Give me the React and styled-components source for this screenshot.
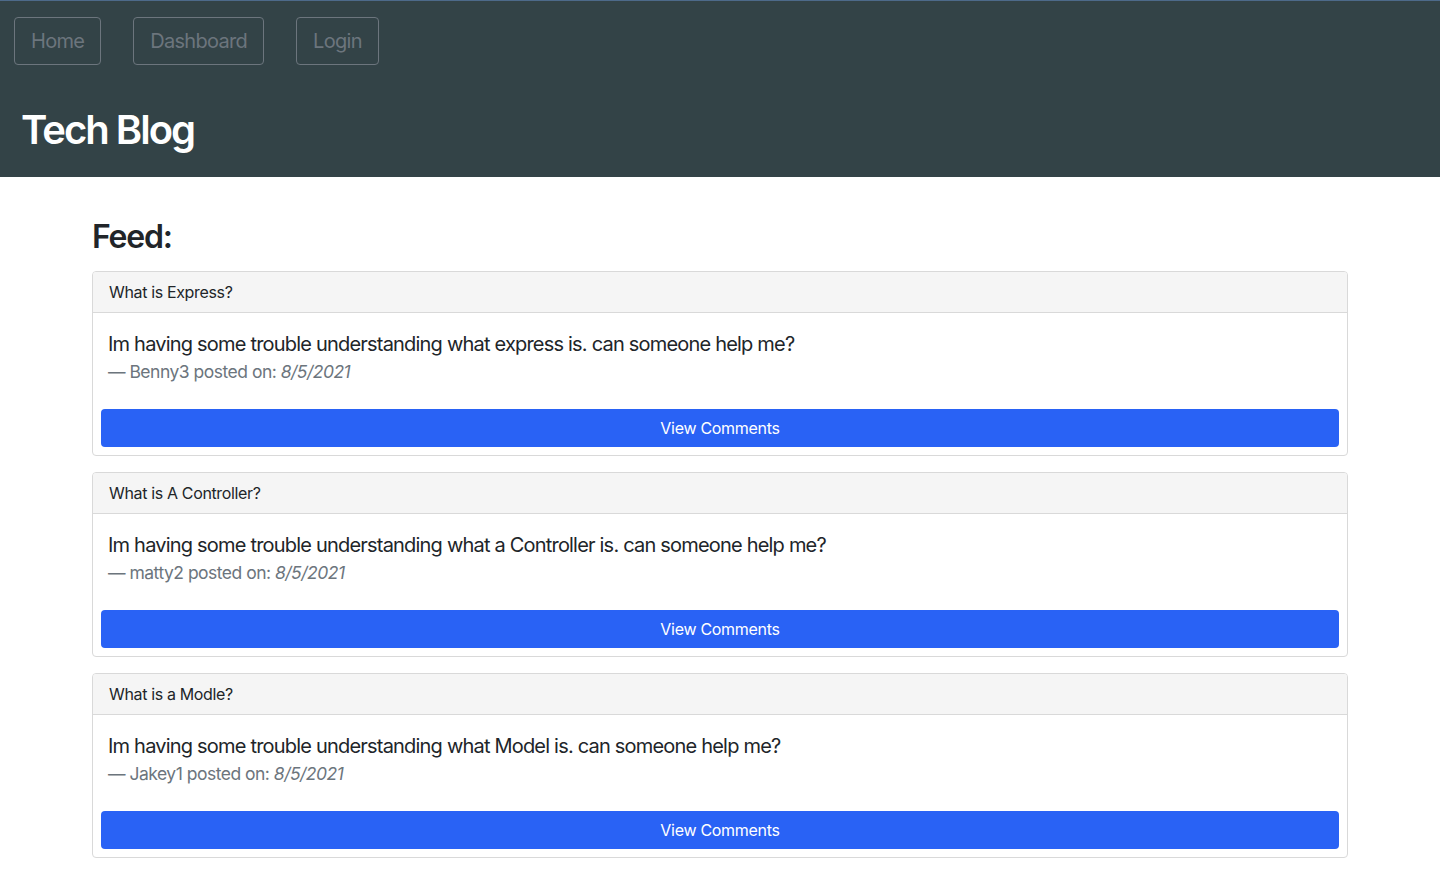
import styled, { createGlobalStyle } from "styled-components"

const Global = createGlobalStyle`
  * { box-sizing: border-box; }
  body {
    margin: 0;
    font-family: Inter, "Noto Sans", "Liberation Sans", sans-serif;
    color: #212529;
    background: #fff;
  }
`;

const Header = styled.header`
  background: #334347;
  border-top: 1px solid #4d6a8a;
  padding: 16px 0 0 14px;
  height: 177px;
`;

const Nav = styled.nav`
  display: flex;
  gap: 32px;
`;

const NavBtn = styled.button`
  font-family: inherit;
  font-size: 20px;
  line-height: 30px;
  letter-spacing: -0.7px;
  padding: 8px 16px;
  background: transparent;
  color: #6c757d;
  border: 1px solid #6c757d;
  border-radius: 4px;
  cursor: pointer;
`;

const Title = styled.h1`
  margin: 41px 0 0 7px;
  font-size: 40px;
  font-weight: 600;
  line-height: 48px;
  color: #fff;
  letter-spacing: -2px;
`;

const Main = styled.main`
  margin: 0 92px;
  padding-top: 41px;
`;

const FeedTitle = styled.h2`
  margin: 0 0 15px;
  font-size: 32px;
  font-weight: 600;
  line-height: 38px;
  letter-spacing: -1.2px;
`;

const Card = styled.section`
  border: 1px solid #d9d9d9;
  border-radius: 4px;
  margin-bottom: 16px;
  overflow: hidden;
`;

const CardHead = styled.div`
  background: #f5f5f5;
  border-bottom: 1px solid #d9d9d9;
  padding: 8px 16px;
  font-size: 16px;
  line-height: 24px;
  letter-spacing: -0.35px;
`;

const CardBody = styled.div`
  padding: 16px 15px 0;
`;

const Lead = styled.p`
  margin: 0;
  font-size: 20px;
  line-height: 30px;
  letter-spacing: -0.8px;
`;

const Byline = styled.p`
  margin: 0 0 24px;
  font-size: 17.5px;
  line-height: 26px;
  letter-spacing: -0.5px;
  color: #6c757d;
  em { font-style: italic; }
`;

const ViewBtn = styled.button`
  display: block;
  width: calc(100% - 16px);
  margin: 0 8px 8px;
  height: 38px;
  border: none;
  border-radius: 4px;
  background: #2962f5;
  color: #fff;
  font-family: inherit;
  font-size: 16px;
  letter-spacing: -0.3px;
  cursor: pointer;
`;

const posts = [
  { title: "What is Express?", body: "Im having some trouble understanding what express is. can someone help me?", user: "Benny3", date: "8/5/2021" },
  { title: "What is A Controller?", body: "Im having some trouble understanding what a Controller is. can someone help me?", user: "matty2", date: "8/5/2021" },
  { title: "What is a Modle?", body: "Im having some trouble understanding what Model is. can someone help me?", user: "Jakey1", date: "8/5/2021" },
];

export default function App() {
  return (
    <>
      <Global />
      <Header>
        <Nav>
          <NavBtn>Home</NavBtn>
          <NavBtn>Dashboard</NavBtn>
          <NavBtn>Login</NavBtn>
        </Nav>
        <Title>Tech Blog</Title>
      </Header>
      <Main>
        <FeedTitle>Feed:</FeedTitle>
        {posts.map((p) => (
          <Card key={p.title}>
            <CardHead>{p.title}</CardHead>
            <CardBody>
              <Lead>{p.body}</Lead>
              <Byline>— {p.user} posted on: <em>{p.date}</em></Byline>
            </CardBody>
            <ViewBtn>View Comments</ViewBtn>
          </Card>
        ))}
      </Main>
    </>
  );
}
